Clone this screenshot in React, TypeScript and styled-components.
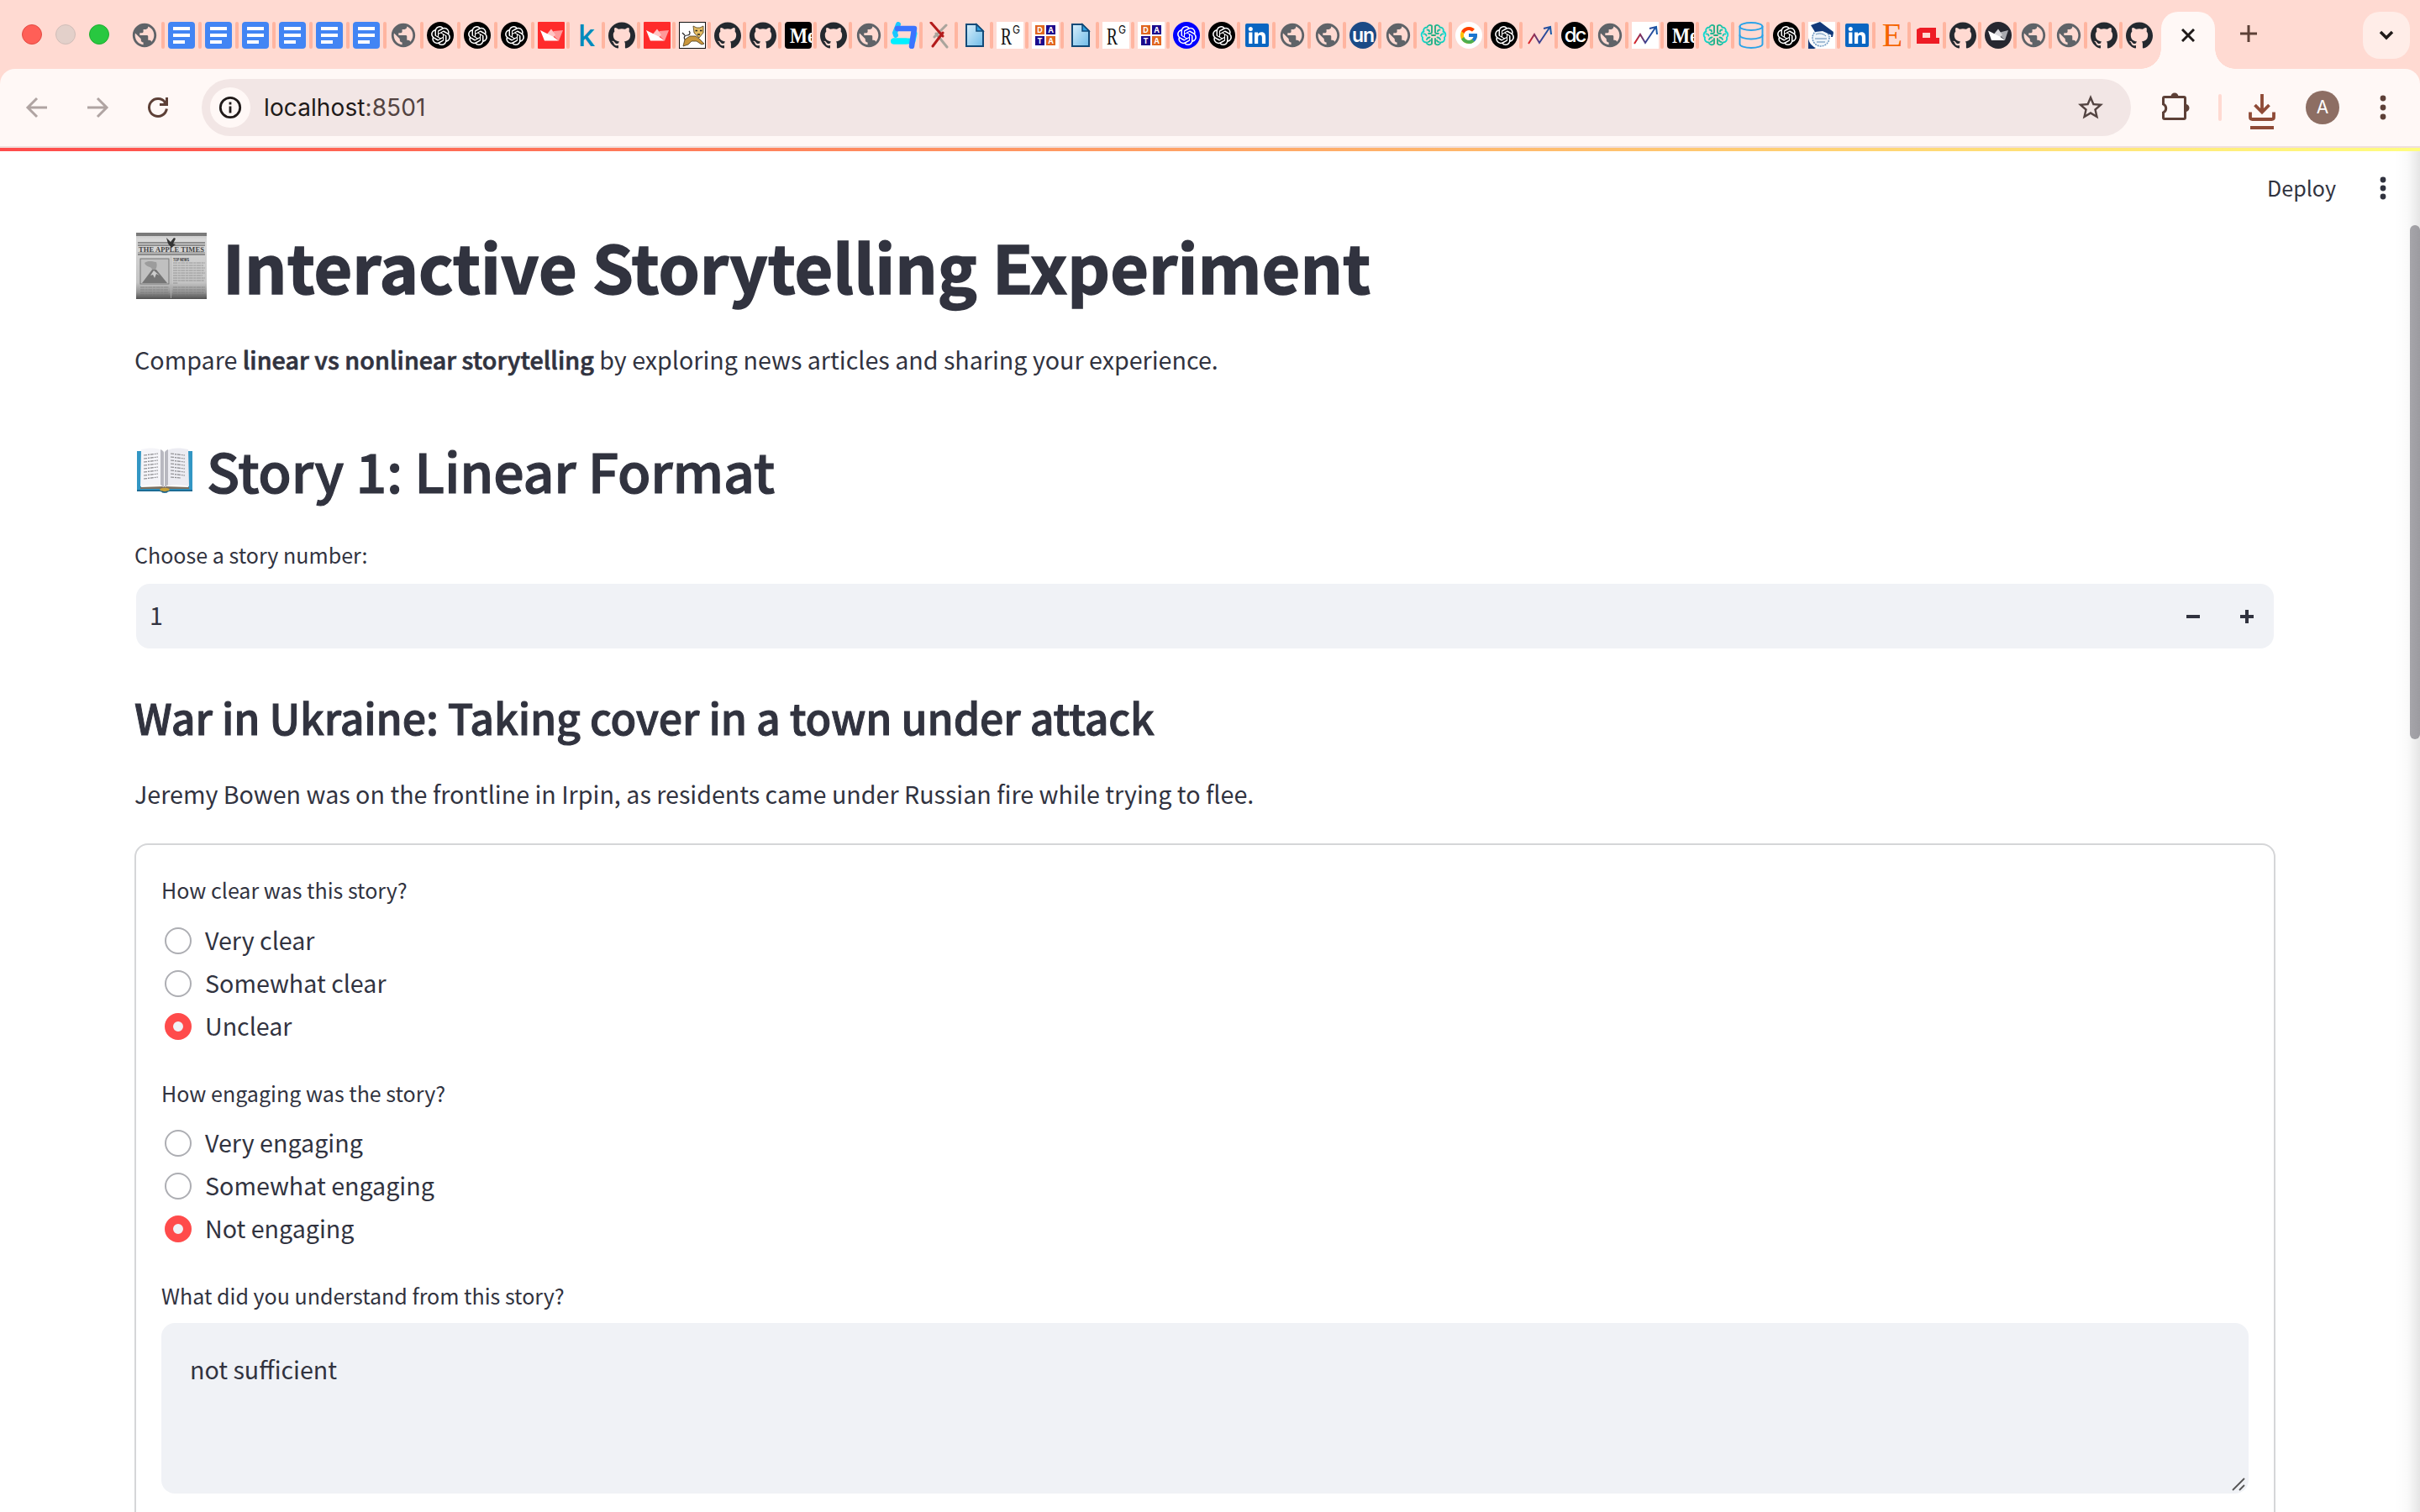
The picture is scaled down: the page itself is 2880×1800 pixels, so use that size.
import React from "react";
import styled, { createGlobalStyle, css } from "styled-components";
import { SiOpenai } from "react-icons/si";
import { FcGoogle } from "react-icons/fc";
import { MdPublic, MdStarBorder } from "react-icons/md";
import { Database } from "lucide-react";

const sans = `"Noto Sans CJK SC", "Open Sans", sans-serif`;
const ui = `"Inter", "Roboto", sans-serif`;
const ink = "#31333f";
const field = "#f0f2f6";

const GlobalStyle = createGlobalStyle`
  * { box-sizing: border-box; }
  html, body { margin: 0; padding: 0; overflow: hidden; background: #fff; }
  svg { display: block; flex: none; }
  h1, h2, h3, p { margin: 0; font-weight: 400; }
`;

const Screen = styled.div`
  width: 2880px;
  height: 1800px;
  overflow: hidden;
  display: flex;
  flex-direction: column;
  background: #ffdad2;
  color: ${ink};
  font-family: ${sans};
`;

/* ---------- tab strip ---------- */
const TabStrip = styled.header`
  height: 82px;
  flex: none;
  display: flex;
  align-items: flex-start;
  background: #ffdad2;
`;
const Lights = styled.div`
  display: flex;
  gap: 16px;
  padding: 29px 0 0 26px;
  width: 156px;
`;
const Light = styled.i<{ $fill: string; $ring: string }>`
  width: 24px;
  height: 24px;
  border-radius: 50%;
  background: ${(p) => p.$fill};
  border: 1px solid ${(p) => p.$ring};
`;
const Tabs = styled.div`
  display: flex;
  height: 32px;
  margin-top: 26px;
`;
const Tab = styled.div<{ $gap: number; $last: boolean }>`
  display: flex;
  align-items: center;
  flex: none;
  width: ${(p) => (p.$last ? 32 : 40 + p.$gap)}px;
  &::after {
    content: "";
    display: ${(p) => (p.$last ? "none" : "block")};
    width: 4px;
    height: 32px;
    border-radius: 2px;
    margin-left: ${(p) => p.$gap}px;
    background: #ffb5a0;
  }
`;
const Favicon = styled.span<{ $bg?: string; $fg?: string; $r?: number }>`
  width: 32px;
  height: 32px;
  flex: none;
  overflow: hidden;
  display: flex;
  align-items: center;
  justify-content: center;
  background: ${(p) => p.$bg ?? "transparent"};
  color: ${(p) => p.$fg ?? "#000"};
  border-radius: ${(p) => p.$r ?? 0}px;
`;
const Glyph = styled.span<{ $size: number; $font?: string; $weight?: number; $pull?: number }>`
  font-family: ${(p) => p.$font ?? ui};
  font-size: ${(p) => p.$size}px;
  font-weight: ${(p) => p.$weight ?? 400};
  line-height: 32px;
  letter-spacing: ${(p) => p.$pull ?? 0}px;
  white-space: nowrap;
`;
const DataGrid = styled.span`
  display: grid;
  grid-template-columns: 11px 11px;
  gap: 2px;
`;
const DataCell = styled.b<{ $bg: string }>`
  height: 11px;
  background: ${(p) => p.$bg};
  color: #fff;
  font: 700 9px/11px ${ui};
  text-align: center;
`;
const ActiveTab = styled.div`
  position: relative;
  margin: 14px 0 0 10px;
  width: 64px;
  height: 68px;
  border-radius: 20px 20px 0 0;
  background: #fff8f6;
  display: flex;
  justify-content: center;
  padding-top: 20px;
  &::before, &::after {
    content: "";
    position: absolute;
    bottom: 0;
    width: 24px;
    height: 24px;
  }
  &::before { right: 100%; background: radial-gradient(circle at 0 0, transparent 23.5px, #fff8f6 24px); }
  &::after { left: 100%; background: radial-gradient(circle at 100% 0, transparent 23.5px, #fff8f6 24px); }
`;
const NewTab = styled.div`
  padding: 30px 0 0 30px;
`;
const TabSearch = styled.div`
  margin: 14px 12px 0 auto;
  width: 56px;
  height: 56px;
  border-radius: 20px;
  background: #ffede8;
  display: flex;
  align-items: center;
  justify-content: center;
`;

/* ---------- toolbar ---------- */
const Toolbar = styled.nav`
  height: 94px;
  flex: none;
  display: flex;
  align-items: flex-start;
  background: #fff8f6;
  border-radius: 18px 18px 0 0;
  border-bottom: 2px solid #f0dfdc;
  padding-top: 12px;
`;
const NavButtons = styled.div`
  width: 240px;
  height: 68px;
  padding-left: 28px;
  display: flex;
  align-items: center;
  gap: 40px;
`;
const Omnibox = styled.div`
  width: 2296px;
  height: 68px;
  border-radius: 34px;
  background: #f2e6e5;
  display: flex;
  align-items: center;
  padding: 0 30px 0 10px;
`;
const SiteInfo = styled.span`
  width: 48px;
  height: 48px;
  border-radius: 50%;
  background: #fff8f6;
  display: flex;
  align-items: center;
  justify-content: center;
`;
const Url = styled.span`
  margin-left: 16px;
  flex: 1;
  font: 400 28px/40px ${ui};
  letter-spacing: 0.1px;
  color: #201a19;
  em { font-style: normal; color: #534341; }
`;
const Actions = styled.div`
  flex: 1;
  height: 68px;
  display: flex;
  align-items: center;
  padding-left: 36px;
`;
const Extensions = styled.span`
  margin-bottom: 3px;
`;
const Divider = styled.i`
  width: 4px;
  height: 32px;
  border-radius: 2px;
  background: #ffdad2;
  margin: 0 32px 0 34px;
`;
const Downloads = styled.span`
  margin-top: 10px;
`;
const Avatar = styled.span`
  width: 40px;
  height: 40px;
  border-radius: 50%;
  background: #8d6e63;
  color: #fff;
  font: 400 21px/40px ${ui};
  text-align: center;
  margin: 0 48px 0 36px;
`;

/* ---------- page ---------- */
const Page = styled.main`
  position: relative;
  flex: 1;
  min-height: 0;
  overflow: hidden;
  background: #fff;
  display: flex;
  flex-direction: column;
`;
const Rainbow = styled.div`
  height: 4px;
  flex: none;
  background: linear-gradient(90deg, #ff4b4b, #fffd80);
`;
const AppHeader = styled.div`
  height: 86px;
  flex: none;
  display: flex;
  align-items: center;
  justify-content: flex-end;
  gap: 52px;
  padding-right: 40px;
  font-size: 25.06px;
  line-height: 42px;
  svg { margin-top: 2px; }
`;
const Column = styled.section`
  width: 2548px;
  margin-left: 160px;
  display: flex;
  flex-direction: column;
  flex: none;
`;
const heading = css`
  display: flex;
  align-items: center;
  white-space: nowrap;
`;
const Title = styled.h1`
  ${heading}
  && { font-weight: 700; }
  font-size: 78.8px;
  line-height: 98px;
  height: 99px;
  letter-spacing: 0.1px;
  -webkit-text-stroke: 1.6px ${ink};
  svg { margin: 3px 18px 0 1px; -webkit-text-stroke: 0; }
`;
const Header = styled.h2`
  ${heading}
  && { font-weight: 500; margin-top: 60px; }
  font-size: 64.4px;
  line-height: 90px;
  height: 90px;
  letter-spacing: -0.2px;
  -webkit-text-stroke: 1.2px ${ink};
  svg { margin: 2px 16px 0 2px; }
`;
const Subheader = styled.h3`
  && { font-weight: 500; margin-top: 46px; }
  font-size: 50.1px;
  line-height: 70px;
  letter-spacing: -0.14px;
  -webkit-text-stroke: 1px ${ink};
  white-space: nowrap;
`;
const Text = styled.p<{ $top: number }>`
  && { margin-top: ${(p) => p.$top}px; }
  font-size: 28.66px;
  line-height: 52px;
  white-space: nowrap;
  strong { font-weight: 500; -webkit-text-stroke: 0.7px ${ink}; letter-spacing: 0.07px; }
`;
const Label = styled.label<{ $top: number; $bottom: number }>`
  font-size: 25.06px;
  line-height: 42px;
  margin: ${(p) => p.$top}px 0 ${(p) => p.$bottom}px;
  white-space: nowrap;
`;
const NumberInput = styled.div`
  width: 2544px;
  height: 77px;
  margin-left: 2px;
  border-radius: 16px;
  background: ${field};
  display: flex;
  align-items: center;
  padding: 0 24px 0 16px;
  gap: 48px;
  font-size: 28.64px;
  line-height: 42px;
  span { flex: 1; margin-top: -4px; }
`;
const Form = styled.form`
  margin-top: 33px;
  height: 1000px;
  border: 2px solid #d5d6d8;
  border-radius: 16px;
  padding: 0 30px;
  display: flex;
  flex-direction: column;
`;
const Option = styled.div`
  height: 51px;
  display: flex;
  align-items: flex-start;
  gap: 16px;
  padding-left: 4px;
  font-size: 28.64px;
  line-height: 47px;
`;
const Radio = styled.i<{ $on: boolean }>`
  width: 32px;
  height: 32px;
  margin-top: 9px;
  border-radius: 50%;
  border: ${(p) => (p.$on ? "10px solid #ff4b4b" : "2px solid #adaeb3")};
  background: ${(p) => (p.$on ? field : "#fff")};
`;
const TextArea = styled.div`
  height: 203px;
  border-radius: 16px;
  background: ${field};
  padding: 34px 4px 3px 34px;
  display: flex;
  justify-content: space-between;
  font-size: 28.64px;
  line-height: 42px;
  svg { align-self: flex-end; }
`;
const EdgeShade = styled.div`
  position: absolute;
  top: 4px;
  right: 0;
  bottom: 0;
  width: 30px;
  background: linear-gradient(90deg, rgba(0, 0, 0, 0), rgba(0, 0, 0, 0.02) 50%, rgba(0, 0, 0, 0.1));
`;
const ScrollThumb = styled.div`
  position: absolute;
  top: 92px;
  right: 0;
  width: 12px;
  height: 612px;
  border-radius: 6px;
  background: linear-gradient(90deg, #a6a5aa, #9c9ba0);
`;

/* ---------- favicon drawings ---------- */
const Globe = () => <Favicon $fg="#5f6368"><MdPublic size={34} /></Favicon>;
const Docs = () => (
  <Favicon $bg="#4285f4" $r={4}>
    <svg width="32" height="32"><path d="M6 6h20v4H6zM6 14h20v4H6zM6 22h14v4H6z" fill="#fff" /></svg>
  </Favicon>
);
const Gpt = ({ bg = "#000" }: { bg?: string }) => <Favicon $bg={bg} $fg="#fff" $r={16}><SiOpenai size={23} /></Favicon>;
const Streamlit = () => (
  <Favicon $bg="#ff2b2b" $r={1}>
    <svg width="32" height="32">
      <path d="M16 14l3-3 11-1-5 12.500z" fill="#ff9a9a" />
      <path d="M16 8.500l5 7-3 3-7-4z" fill="#ffc4c4" />
      <path d="M3 10l15 7.500 7 5h-17z" fill="#fff" />
    </svg>
  </Favicon>
);
const Kaggle = () => <Favicon $fg="#008abc"><Glyph $size={36} $weight={500}>k</Glyph></Favicon>;
const Github = () => (
  <Favicon>
    <svg width="32" height="32" viewBox="0 0 24 24" fill="#24292f">
      <path d="M12 .297c-6.630 0-12 5.373-12 12 0 5.303 3.438 9.800 8.205 11.385.600.113.820-.258.820-.577 0-.285-.010-1.040-.015-2.040-3.338.724-4.042-1.610-4.042-1.610C4.422 18.070 3.633 17.700 3.633 17.700c-1.087-.744.084-.729.084-.729 1.205.084 1.838 1.236 1.838 1.236 1.070 1.835 2.809 1.305 3.495.998.108-.776.417-1.305.760-1.605-2.665-.300-5.466-1.332-5.466-5.930 0-1.310.465-2.380 1.235-3.220-.135-.303-.540-1.523.105-3.176 0 0 1.005-.322 3.300 1.230.960-.267 1.980-.399 3-.405 1.020.006 2.040.138 3 .405 2.280-1.552 3.285-1.230 3.285-1.230.645 1.653.240 2.873.120 3.176.765.840 1.230 1.910 1.230 3.220 0 4.610-2.805 5.625-5.475 5.920.420.360.810 1.096.810 2.220 0 1.606-.015 2.896-.015 3.286 0 .315.210.690.825.570C20.565 22.092 24 17.592 24 12.297c0-6.627-5.373-12-12-12" />
    </svg>
  </Favicon>
);
const Tomcat = () => (
  <Favicon $bg="#fff">
    <svg width="32" height="32" fill="none">
      <rect x=".5" y=".5" width="31" height="31" stroke="#111" />
      <path d="M5 29l2-8 6-4 7 0 4 3 6 6-3 1-6-4-6 0-4 4z" fill="#c9963b" stroke="#4a3a1a" strokeWidth=".8" />
      <path d="M17 5l4 2h4l4-2v8l-5 6-6-6z" fill="#e5bd62" stroke="#4a3a1a" strokeWidth=".8" />
      <path d="M19.500 10.500h2.500M25 10.500h2.500M22 15h3" stroke="#222" strokeWidth="1.300" />
      <path d="M12 11c2 2 1 5-2 5s-5 2-3 5M4 13l3 3" stroke="#222" strokeWidth="1.200" />
    </svg>
  </Favicon>
);
const Medium = () => (
  <Favicon $bg="#000" $fg="#fff" $r={4}>
    <svg width="32" height="32"><text x="6" y="24.500" fontFamily="Liberation Serif, serif" fontWeight="700" fontSize="26" textLength="31" lengthAdjust="spacingAndGlyphs" fill="#fff">Me</text></svg>
  </Favicon>
);
const Loop = () => (
  <Favicon>
    <svg width="32" height="32" fill="none" strokeLinejoin="round" strokeLinecap="round">
      <path d="M9 3L5 13l1 3" stroke="#19c8ff" strokeWidth="6" />
      <path d="M3.500 23H26l2-9" stroke="#0ae6ff" strokeWidth="7" />
      <path d="M8 8h20l-3 21" stroke="#3b74ff" strokeWidth="6.500" />
      <path d="M4 23h14" stroke="#00f0ff" strokeWidth="7" />
    </svg>
  </Favicon>
);
const Arxiv = () => (
  <Favicon>
    <svg width="32" height="32" fill="none" strokeLinecap="round">
      <path d="M24 4L10 18M12 14l13 16" stroke="#aaa49c" strokeWidth="3" />
      <path d="M6 1l14 16M20 13L8 29" stroke="#b31b1b" strokeWidth="3" />
    </svg>
  </Favicon>
);
const FileIcon = () => (
  <Favicon>
    <svg width="32" height="32">
      <defs><linearGradient id="sheet" x1="0" y1="0" x2="1" y2="1"><stop offset="0" stopColor="#d9effb" /><stop offset="1" stopColor="#6fbbe8" /></linearGradient></defs>
      <path d="M6 3h12l8 8v18H6z" fill="url(#sheet)" stroke="#124a78" strokeWidth="2" />
      <path d="M18 3v8h8z" fill="#2e9fe0" stroke="#124a78" strokeWidth="1.500" />
    </svg>
  </Favicon>
);
const ResearchGate = () => (
  <Favicon $bg="#fff">
    <svg width="32" height="32" fill="#111">
      <text x="5" y="27" fontFamily="Liberation Serif, serif" fontSize="30" textLength="13" lengthAdjust="spacingAndGlyphs">R</text>
      <text x="19" y="14" fontFamily="Inter, sans-serif" fontSize="13" textLength="9" lengthAdjust="spacingAndGlyphs">G</text>
    </svg>
  </Favicon>
);
const Data = () => (
  <Favicon $bg="#fff">
    <DataGrid>
      <DataCell $bg="#e0661f">D</DataCell><DataCell $bg="#1c0a8c">A</DataCell>
      <DataCell $bg="#1c0a8c">T</DataCell><DataCell $bg="#e0661f">A</DataCell>
    </DataGrid>
  </Favicon>
);
const LinkedIn = () => (
  <Favicon>
    <svg width="32" height="32">
      <rect x="2" y="2" width="28" height="28" rx="2" fill="#0a66c2" />
      <circle cx="8.300" cy="8.500" r="2.500" fill="#fff" />
      <path d="M6.200 12.600h4.200V26H6.200zM13 12.600h4v1.900c.700-1.200 2.100-2.200 4.200-2.200 4 0 4.900 2.600 4.900 6.100V26h-4.200v-6.700c0-1.600 0-3.500-2.200-3.500s-2.500 1.700-2.500 3.400V26H13z" fill="#fff" />
    </svg>
  </Favicon>
);
const Un = () => <Favicon $bg="#1b4a86" $fg="#fff" $r={16}><Glyph $size={23} $weight={600} $pull={-1}>un</Glyph></Favicon>;
const lobe = "M14 5c-2-2-5-1-5.500 1.500C5 6.500 3.500 9 4.500 11.500 1 12.500 1 17 3 18.500 2 22 4.500 24.500 7.500 24.500 8.500 28 12.500 28 14 26V20M14 5v7q0 2-2 2H10M8.500 9.500q2.500 0 2.500 2M4.500 14.500q2.500-.5 3 2M8 21q1-2.500 3.500-2.500M9.500 24q2 0 2.500-2M14 16h2";
const BrainMark = () => (
  <Favicon>
    <svg width="32" height="32" fill="none" strokeWidth="1.900" strokeLinecap="round" strokeLinejoin="round">
      <defs>
        <linearGradient id="neural" x1="0" x2="1"><stop offset="0" stopColor="#0fdcd6" /><stop offset="1" stopColor="#28a878" /></linearGradient>
      </defs>
      <path d={lobe} stroke="url(#neural)" />
      <path d={lobe} stroke="url(#neural)" transform="translate(32 0) scale(-1 1)" />
    </svg>
  </Favicon>
);
const Google = () => <Favicon><Favicon $bg="#fff" $r={16}><FcGoogle size={24} /></Favicon></Favicon>;
const Chart = ({ bg }: { bg?: string }) => (
  <Favicon $bg={bg}>
    <svg width="32" height="32" fill="none">
      <defs><linearGradient id="trend" x1="0" x2="1"><stop offset="0" stopColor="#e02020" /><stop offset=".5" stopColor="#3b3f8f" /><stop offset="1" stopColor="#1659a8" /></linearGradient></defs>
      <path d="M3 26l7-11 6 10L28 7M21 8l8-2 1 9" stroke="url(#trend)" strokeWidth="2" />
    </svg>
  </Favicon>
);
const Dc = () => <Favicon $bg="#000" $fg="#fff" $r={16}><Glyph $size={24} $weight={500} $pull={-2}>dc</Glyph></Favicon>;
const Db = () => <Favicon $fg="#2ba3e8"><Database size={36} strokeWidth={1.3} /></Favicon>;
const Grad = () => (
  <Favicon $bg="#fff">
    <svg width="32" height="32">
      <circle cx="15" cy="19" r="10" fill="#eef4f9" stroke="#6c97c0" strokeWidth="1.500" strokeDasharray="2 1" />
      <path d="M3 4l11-4 16 12-2 4-11-5-9 1z" fill="#123a7a" />
      <path d="M0 14c-1 9 3 14 9 17l-2 1H0zM28 12l2 1-1 5h-2z" fill="#123a7a" />
      <path d="M9 15c4-2 9-1 12 2M8 20h14M10 24h10" stroke="#5c88b5" fill="none" />
    </svg>
  </Favicon>
);
const Etsy = () => <Favicon $fg="#f56400"><Glyph $size={40} $font={`"Liberation Serif", serif`}>E</Glyph></Favicon>;
const RedP = () => (
  <Favicon><svg width="32" height="32"><path fillRule="evenodd" d="M3 9l4-2h19v12h4v7H3zM10 13v6h9v-6z" fill="#ee1c25" /></svg></Favicon>
);
const Crown = () => (
  <Favicon $bg="#262730" $r={16}>
    <svg width="32" height="32">
      <path d="M16 14l4-2 8-2-4 12z" fill="#a9aab0" />
      <path d="M16 8.500l5 7-3 3-7-4z" fill="#d8d8dc" />
      <path d="M4 10.500l14 7 6 4.500H8z" fill="#fff" />
    </svg>
  </Favicon>
);

const BlueGpt = () => <Gpt bg="#0000ff" />;
const BlackGpt = () => <Gpt />;
const WhiteChart = () => <Chart bg="#fff" />;
const ClearChart = () => <Chart />;
const favicons: React.FC[] = [
  Globe, Docs, Docs, Docs, Docs, Docs, Docs, Globe, BlackGpt, BlackGpt, BlackGpt, Streamlit, Kaggle, Github, Streamlit,
  Tomcat, Github, Github, Medium, Github, Globe, Loop, Arxiv, FileIcon, ResearchGate, Data, FileIcon, ResearchGate, Data,
  BlueGpt, BlackGpt, LinkedIn, Globe, Globe, Un, Globe, BrainMark, Google, BlackGpt, ClearChart, Dc, Globe, WhiteChart,
  Medium, BrainMark, Db, BlackGpt, Grad, LinkedIn, Etsy, RedP, Github, Crown, Globe, Globe, Github, Github,
];

/* ---------- emoji drawings ---------- */
const Newspaper = () => (
  <svg width="86" height="80" viewBox="0 0 86 80">
    <defs>
      <linearGradient id="paper" x1="0" y1="0" x2="0" y2="1">
        <stop offset="0" stopColor="#c4c4c4" /><stop offset=".1" stopColor="#d8d8d8" /><stop offset=".75" stopColor="#c4c4c4" />
        <stop offset=".9" stopColor="#949494" /><stop offset="1" stopColor="#505050" />
      </linearGradient>
    </defs>
    <path d="M1 0h84v79H1z" fill="url(#paper)" />
    <path d="M1 0h84v4H1z" fill="#7a7a7a" />
    <path d="M3 12h80M3 15h80M3 23.500h80M3 26h80" stroke="#777" strokeWidth="1.300" />
    <path d="M3 16.500h80v7H3z" fill="#d4d4d4" />
    <path d="M37 6l5 5 4-5 2 1-3 6 3 1-5 4-4-5z" fill="#333" />
    <text x="4" y="23" fontFamily="Liberation Serif, serif" fontWeight="700" fontSize="8.500" textLength="78" lengthAdjust="spacingAndGlyphs" fill="#444" strokeWidth="0">THE APPLE TIMES</text>
    <rect x="6" y="31" width="34" height="30" fill="#c0c0c0" stroke="#777" />
    <path d="M8 60l12-16h5l13 16z" fill="#757575" />
    <path d="M22 45l-4 6 3-1 2 4 2-5 4 2z" fill="#ccc" />
    <path d="M20 44c0-4-8-3-9-8 4-3 8-2 14-1 1 3 1 6-1 9z" fill="#9c9c9c" />
    <text x="45" y="33.500" fontFamily="Inter, sans-serif" fontWeight="700" fontSize="4.500" textLength="19" lengthAdjust="spacingAndGlyphs" fill="#333" strokeWidth="0">TOP NEWS</text>
    <path d="M45 36h38M45 39h36M45 42h38M45 45h37M45 48h38M45 51h35M45 54h38M45 57h37M45 60h6M6 65h34M6 68h33M6 71h34M6 74h34M45 65h38M45 68h38M45 71h37M45 74h38" stroke="#666" strokeWidth="1" strokeDasharray="5 .7 3 .6" opacity=".5" />
    <path d="M42.500 28v50" stroke="#b4b4b4" strokeWidth=".8" />
  </svg>
);
const Book = () => (
  <svg width="68" height="54" viewBox="0 0 68 54">
    <path d="M1 4h5v44h56V4h5v48H40l-6 2-6-2H1z" fill="#3296c4" />
    <path d="M1 50h66v2H1z" fill="#1b6c96" />
    <path d="M5 47l28-1 30 1v2H38l-4 2-4-2H5z" fill="#7d6f5e" />
    <path d="M6 2c9-2 20-3 27 3v42c-7-4-18-3-28-1z" fill="#f4f4f8" />
    <path d="M62 2C53 0 42-1 34 5v42c7-4 19-3 29-1z" fill="#ececf2" />
    <path d="M29 2c2 1 4 2 4 4v41l-4-3zM38 2c-2 1-4 2-4 4v41l4-3z" fill="#b8b8c0" />
    <path d="M9 9l17-2M9 13l17-2M9 17l17-2M9 21l17-2M9 25l17-2M9 29l17-2M9 33l17-2M9 37l17-2M41 7l17 2M41 11l17 2M41 15l17 2M41 19l17 2M41 23l17 2M41 27l17 2M41 31l17 2M41 35l12 1" stroke="#8a8a8e" strokeWidth="1.200" strokeDasharray="4 1 2 .8" />
    <path d="M28 50c1-3 11-3 12 0-2 3-10 3-12 0z" fill="#c8a038" />
    <path d="M30 51c2 1.500 6 1.500 8 0l-1 2.500h-6z" fill="#1f5878" />
  </svg>
);

const Dots = ({ color, gap }: { color: string; gap: number }) => (
  <svg width="8" height="32" viewBox="0 0 8 32" fill={color}>
    <circle cx="4" cy={16 - gap} r="3.400" /><circle cx="4" cy="16" r="3.400" /><circle cx="4" cy={16 + gap} r="3.400" />
  </svg>
);

const questions = [
  { q: "How clear was this story?", top: 32, bottom: 15, options: ["Very clear", "Somewhat clear", "Unclear"] },
  { q: "How engaging was the story?", top: 32, bottom: 14, options: ["Very engaging", "Somewhat engaging", "Not engaging"] },
];

export default function App() {
  return (
    <Screen>
      <GlobalStyle />
      <TabStrip>
        <Lights>
          <Light $fill="#ff5f57" $ring="#e24b43" />
          <Light $fill="#e3d0ca" $ring="#d0bdb8" />
          <Light $fill="#28c840" $ring="#1dad2f" />
        </Lights>
        <Tabs>
          {favicons.map((Icon, i) => (
            <Tab key={i} $gap={i < 11 ? 4 : 2} $last={i === favicons.length - 1}>
              <Icon />
            </Tab>
          ))}
        </Tabs>
        <ActiveTab>
          <svg width="16" height="16" stroke="#201a19" strokeWidth="3"><path d="M1 1l14 14M15 1L1 15" /></svg>
        </ActiveTab>
        <NewTab>
          <svg width="20" height="20" stroke="#5d4037" strokeWidth="3"><path d="M10 0v20M0 10h20" /></svg>
        </NewTab>
        <TabSearch>
          <svg width="18" height="12" fill="none" stroke="#201a19" strokeWidth="3.500"><path d="M2 2l7 7 7-7" /></svg>
        </TabSearch>
      </TabStrip>
      <Toolbar>
        <NavButtons>
          <svg width="32" height="32" fill="none" stroke="#b0a4a2" strokeWidth="3"><path d="M28 16H6M16 5L5 16l11 11" /></svg>
          <svg width="32" height="32" fill="none" stroke="#b0a4a2" strokeWidth="3"><path d="M4 16h22M16 5l11 11-11 11" /></svg>
          <svg width="32" height="32" fill="none" stroke="#5d4037" strokeWidth="3"><path d="M26.400 17.500A10.500 10.500 0 1 1 24.500 9.800" /><path d="M26.500 4v8.500H18" /><path d="M21 12l5.500-5v5z" fill="#5d4037" stroke="none" /></svg>
        </NavButtons>
        <Omnibox>
          <SiteInfo>
            <svg width="28" height="28" fill="none" stroke="#201a19" strokeWidth="2.800"><circle cx="14" cy="14" r="11.700" /><path d="M14 12.500v8M14 7.500v3" /></svg>
          </SiteInfo>
          <Url>localhost<em>:8501</em></Url>
          <MdStarBorder size={36} color="#534341" />
        </Omnibox>
        <Actions>
          <Extensions>
            <svg width="34" height="34" viewBox="0 0 34 34" fill="none" stroke="#5d4037" strokeWidth="3">
              <path d="M4 5.500h23q1.500 0 1.500 1.500v23q0 1.500-1.500 1.500H4q-1.500 0-1.500-1.500v-6a5.500 5.500 0 0 0 0-10V7q0-1.500 1.500-1.500z" />
              <path d="M11.500 5a4.500 4.500 0 0 1 9 0zM29 14a4.500 4.500 0 0 1 0 9z" fill="#5d4037" stroke="none" />
            </svg>
          </Extensions>
          <Divider />
          <Downloads>
            <svg width="32" height="42" fill="none" stroke="#8f4a36" strokeWidth="3.800"><path d="M16 0v21M7.500 13l8.500 8.500L24.500 13" /><path d="M2 21.500v6q0 2.500 2.500 2.500h23q2.500 0 2.500-2.500v-6M2 40h28" /></svg>
          </Downloads>
          <Avatar>A</Avatar>
          <Dots color="#5d4037" gap={11} />
        </Actions>
      </Toolbar>
      <Page>
        <Rainbow />
        <AppHeader>
          <span>Deploy</span>
          <Dots color={ink} gap={10} />
        </AppHeader>
        <Column>
          <Title><Newspaper />Interactive Storytelling Experiment</Title>
          <Text $top={37}>Compare <strong>linear vs nonlinear storytelling</strong> by exploring news articles and sharing your experience.</Text>
          <Header><Book />Story 1: Linear Format</Header>
          <Label $top={35} $bottom={14}>Choose a story number:</Label>
          <NumberInput>
            <span>1</span>
            <svg width="16" height="16" fill={ink}><path d="M0 6h16v4H0z" /></svg>
            <svg width="16" height="16" fill={ink}><path d="M0 6h6V0h4v6h6v4h-6v6H6v-6H0z" /></svg>
          </NumberInput>
          <Subheader>War in Ukraine: Taking cover in a town under attack</Subheader>
          <Text $top={31}>Jeremy Bowen was on the frontline in Irpin, as residents came under Russian fire while trying to flee.</Text>
          <Form>
            {questions.map((item) => (
              <React.Fragment key={item.q}>
                <Label $top={item.top} $bottom={item.bottom}>{item.q}</Label>
                {item.options.map((o, i) => (
                  <Option key={o}><Radio $on={i === 2} />{o}</Option>
                ))}
              </React.Fragment>
            ))}
            <Label $top={32} $bottom={12}>What did you understand from this story?</Label>
            <TextArea>
              not sufficient
              <svg width="16" height="16" stroke="#555" strokeWidth="1.800"><path d="M1 15L15 1M9 15l6-6" /></svg>
            </TextArea>
          </Form>
        </Column>
        <EdgeShade />
        <ScrollThumb />
      </Page>
    </Screen>
  );
}
